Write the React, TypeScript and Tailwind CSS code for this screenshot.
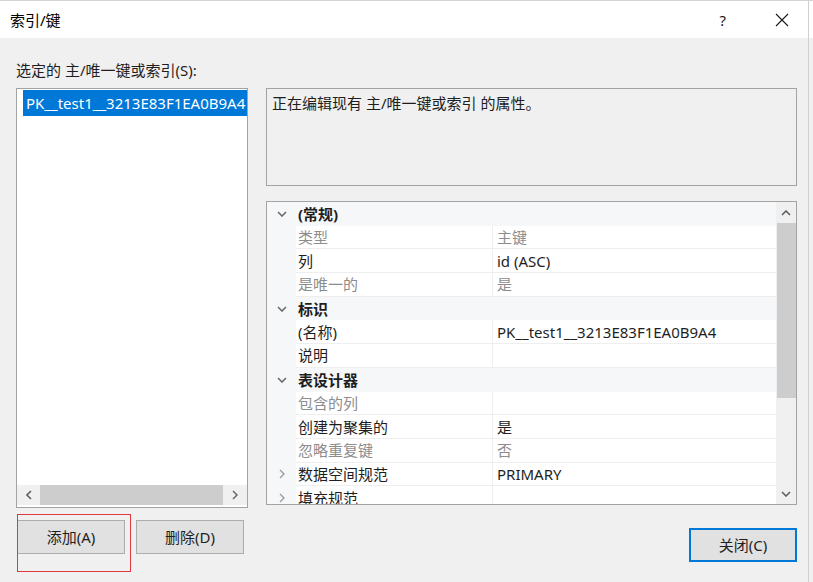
import React from 'react';

type PropRow =
  | { kind: 'cat'; label: string }
  | { kind: 'prop'; label: string; value?: string; dim?: boolean; expander?: boolean };

const rows: PropRow[] = [
  { kind: 'cat', label: '(常规)' },
  { kind: 'prop', label: '类型', value: '主键', dim: true },
  { kind: 'prop', label: '列', value: 'id (ASC)' },
  { kind: 'prop', label: '是唯一的', value: '是', dim: true },
  { kind: 'cat', label: '标识' },
  { kind: 'prop', label: '(名称)', value: 'PK__test1__3213E83F1EA0B9A4' },
  { kind: 'prop', label: '说明' },
  { kind: 'cat', label: '表设计器' },
  { kind: 'prop', label: '包含的列', dim: true },
  { kind: 'prop', label: '创建为聚集的', value: '是' },
  { kind: 'prop', label: '忽略重复键', value: '否', dim: true },
  { kind: 'prop', label: '数据空间规范', value: 'PRIMARY', expander: true },
  { kind: 'prop', label: '填充规范', expander: true },
];

function ChevronDown({ className }: { className?: string }) {
  return (
    <svg className={className} width="10" height="6" viewBox="0 0 10 6" fill="none" stroke="currentColor" strokeWidth="1.6" aria-hidden>
      <path d="M1 1l4 4 4-4" />
    </svg>
  );
}

function ChevronUp({ className }: { className?: string }) {
  return (
    <svg className={className} width="10" height="6" viewBox="0 0 10 6" fill="none" stroke="currentColor" strokeWidth="1.6" aria-hidden>
      <path d="M1 5l4-4 4 4" />
    </svg>
  );
}

function ChevronRight({ className }: { className?: string }) {
  return (
    <svg className={className} width="6" height="10" viewBox="0 0 6 10" fill="none" stroke="currentColor" strokeWidth="1.4" aria-hidden>
      <path d="M1 1l4 4-4 4" />
    </svg>
  );
}

function ChevronLeft({ className }: { className?: string }) {
  return (
    <svg className={className} width="6" height="10" viewBox="0 0 6 10" fill="none" stroke="currentColor" strokeWidth="1.6" aria-hidden>
      <path d="M5 1L1 5l4 4" />
    </svg>
  );
}

function CloseIcon() {
  return (
    <svg width="14" height="14" viewBox="0 0 14 14" fill="none" stroke="#1a1a1a" strokeWidth="1.1" aria-hidden>
      <path d="M1 1l12 12M13 1L1 13" />
    </svg>
  );
}

function GridRow({ row }: { row: PropRow }) {
  if (row.kind === 'cat') {
    return (
      <div className="flex h-[23.7px] shrink-0 items-center bg-[#f6f7f9]">
        <div className="flex w-[29px] shrink-0 justify-center pl-[1px]">
          <ChevronDown className="text-[#6b6b6b]" />
        </div>
        <span className="pl-[2px] font-bold text-[#1e1e1e]">{row.label}</span>
      </div>
    );
  }
  const tone = row.dim ? 'text-[#8d8d8d]' : 'text-[#1e1e1e]';
  return (
    <div className="flex h-[23.7px] shrink-0 items-stretch">
      <div className="flex w-[29px] shrink-0 items-center justify-center bg-[#f6f7f9]">
        {row.expander && <ChevronRight className="text-[#9c9c9c]" />}
      </div>
      <div className={`flex w-[197px] shrink-0 items-center border-b border-r border-[#eeeeee] bg-white pl-[2px] ${tone}`}>
        {row.label}
      </div>
      <div className={`flex min-w-0 flex-1 items-center border-b border-[#eeeeee] bg-white pl-[4px] ${tone}`}>
        {row.value}
      </div>
    </div>
  );
}

export default function App() {
  return (
    <div
      className="relative flex h-[582px] w-[813px] flex-col overflow-hidden border-t border-[#d4d4d4] bg-[#f0f0f0] text-[15px] leading-[20px] text-[#1e1e1e]"
      style={{ fontFamily: '"Noto Sans", "Noto Sans CJK SC", sans-serif' }}
    >
      {/* Title bar */}
      <div className="flex h-[37px] shrink-0 items-center bg-white pl-[10px]">
        <span className="text-[#000]">索引/键</span>
        <span className="ml-auto mr-[49px] text-[#1a1a1a]">?</span>
        <span className="mr-[24px] flex">
          <CloseIcon />
        </span>
      </div>

      <div className="flex flex-1 flex-col px-[16px]">
        <div className="mt-[22px] h-[20px]">选定的 主/唯一键或索引(S):</div>

        <div className="mt-[8px] flex gap-[18px]">
          {/* Index list */}
          <div className="flex h-[420px] w-[232px] shrink-0 flex-col border border-[#a3a3a3] bg-white">
            <div className="flex-1 pl-[6px] pt-[1px]">
              <div className="flex h-[26px] items-center overflow-hidden whitespace-nowrap bg-[#0078d7] pl-[3px] text-white">
                PK__test1__3213E83F1EA0B9A4
              </div>
            </div>
            <div className="mb-[2px] flex h-[20px] items-stretch bg-[#f0f0f0]">
              <div className="flex w-[23px] items-center justify-center text-[#606060]">
                <ChevronLeft />
              </div>
              <div className="w-[183px] bg-[#cdcdcd]" />
              <div className="flex flex-1 items-center justify-center text-[#606060]">
                <ChevronRight />
              </div>
            </div>
          </div>

          {/* Right side */}
          <div className="flex w-[531px] flex-col">
            <div className="h-[98px] border border-[#a3a3a3] bg-[#f0f0f0] px-[5px] pt-[4px]">
              正在编辑现有 主/唯一键或索引 的属性。
            </div>

            <div className="mt-[15px] flex h-[304px] border border-[#a3a3a3] bg-white">
              <div className="flex min-w-0 flex-1 flex-col overflow-hidden">
                {rows.map((r, i) => (
                  <GridRow key={i} row={r} />
                ))}
              </div>
              <div className="flex w-[20px] shrink-0 flex-col bg-[#f0f0f0]">
                <div className="flex h-[21px] items-center justify-center text-[#606060]">
                  <ChevronUp />
                </div>
                <div className="mx-auto h-[175px] w-[19px] bg-[#cdcdcd]" />
                <div className="flex-1" />
                <div className="flex h-[21px] items-center justify-center text-[#606060]">
                  <ChevronDown />
                </div>
              </div>
            </div>
          </div>
        </div>

        {/* Buttons */}
        <div className="mt-[12px] flex items-start">
          <button className="ml-[1px] h-[34px] w-[108px] border border-[#adadad] bg-[#e1e1e1] text-[#1e1e1e]">
            添加(A)
          </button>
          <button className="ml-[11px] h-[34px] w-[108px] border border-[#adadad] bg-[#e1e1e1] text-[#1e1e1e]">
            删除(D)
          </button>
          <button className="ml-auto mt-[8px] h-[34px] w-[108px] border-2 border-[#0078d7] bg-[#e1e1e1] text-[#1e1e1e]">
            关闭(C)
          </button>
        </div>
      </div>

      {/* Red annotation box */}
      <div className="pointer-events-none absolute left-[17px] top-[513px] h-[58px] w-[114px] border border-[#e0393e]" />
      {/* Window edge */}
      <div className="pointer-events-none absolute right-[4px] top-0 h-full w-px bg-[#d0d0d0]" />
    </div>
  );
}
